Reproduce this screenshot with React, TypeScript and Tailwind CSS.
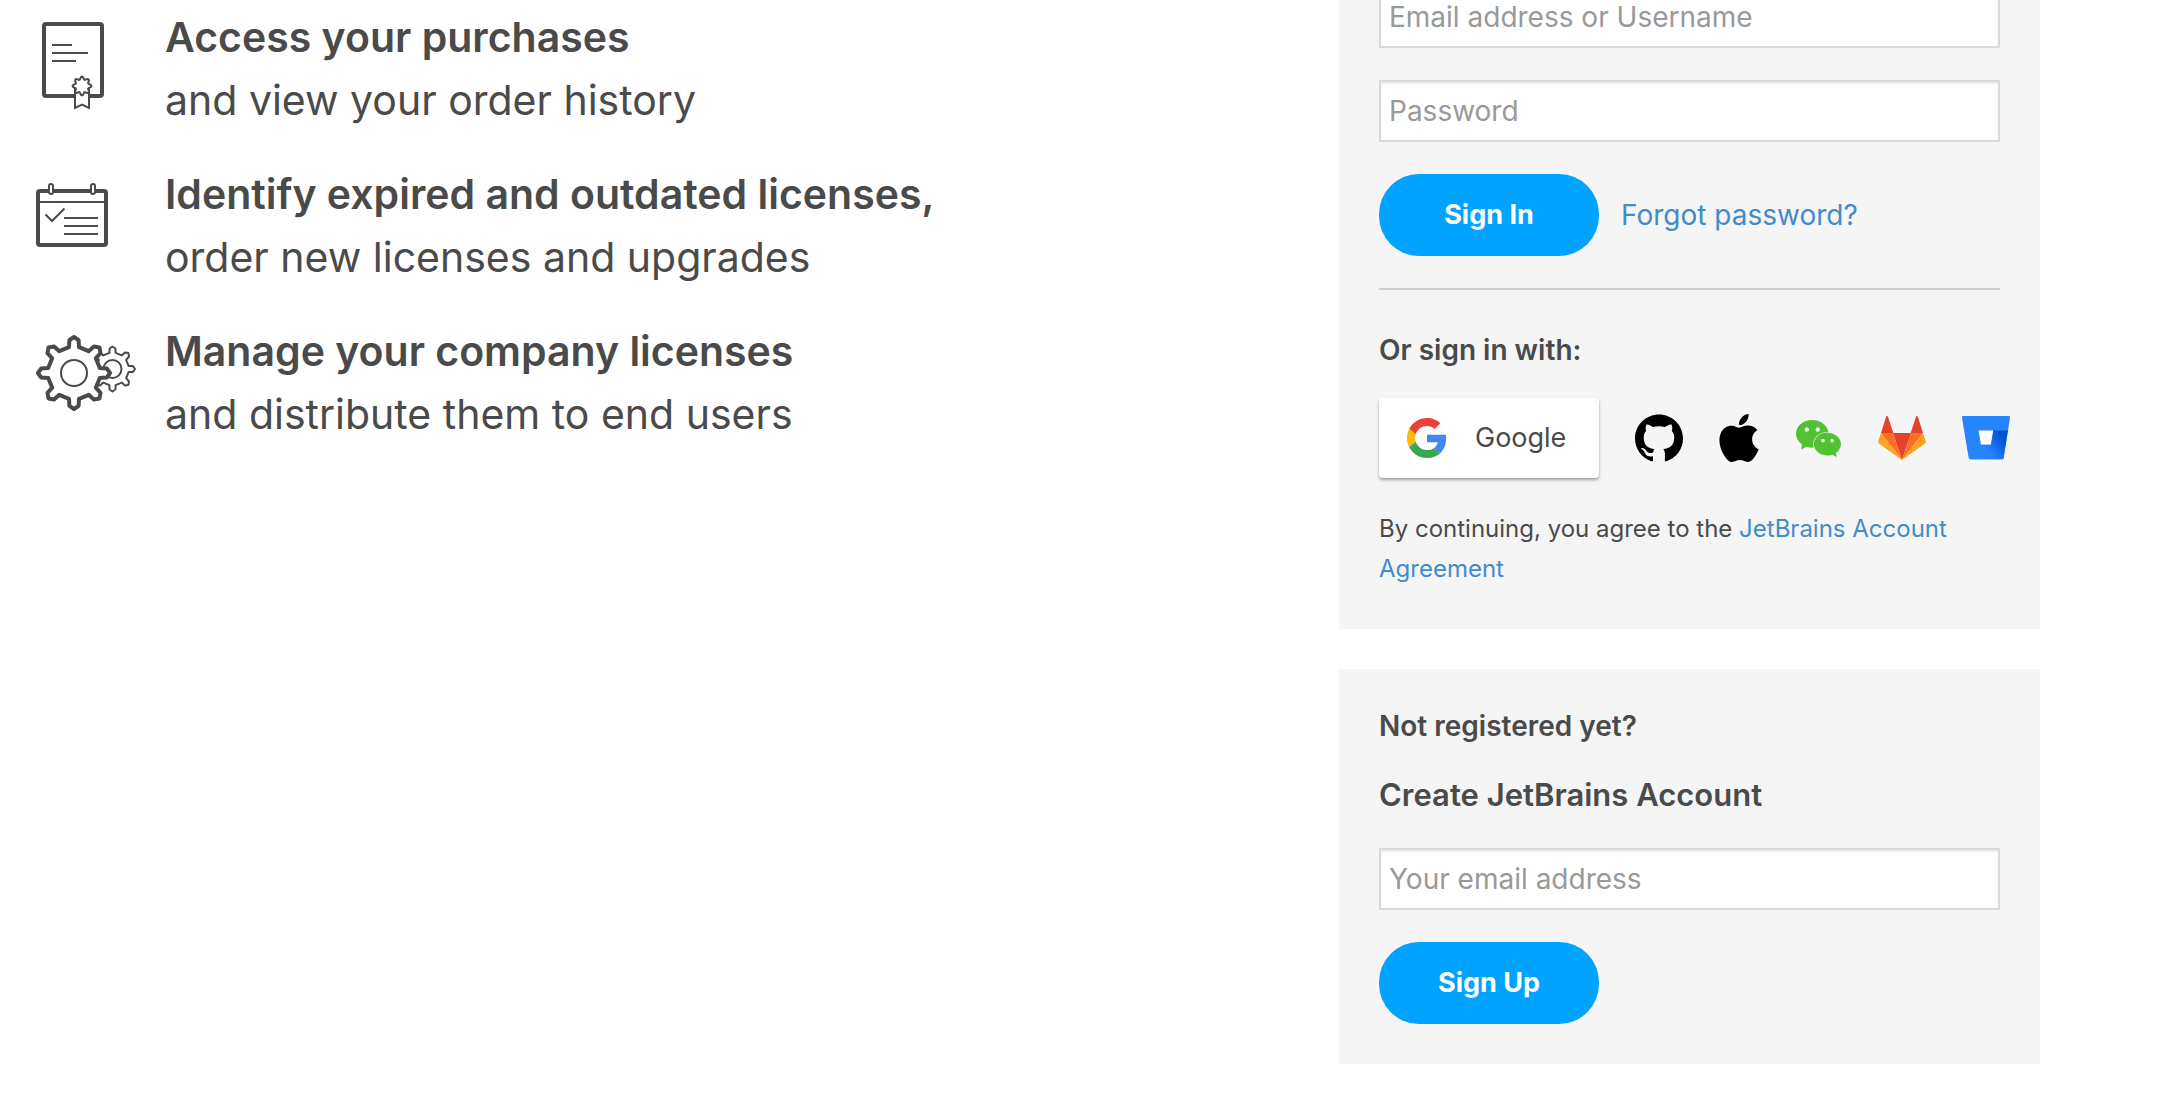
import type { ReactNode } from 'react'
import { SiApple, SiGithub, SiWechat } from 'react-icons/si'

const STROKE = '#4a4a4a'

type Point = [number, number]

function polar(cx: number, cy: number, r: number, deg: number): Point {
  const a = (deg * Math.PI) / 180
  return [cx + r * Math.sin(a), cy - r * Math.cos(a)]
}

function toPath(pts: Point[]): string {
  return 'M' + pts.map(([x, y]) => `${x.toFixed(1)} ${y.toFixed(1)}`).join('L') + 'Z'
}

/* Outline of an eight-toothed cog with slightly pointed teeth. */
function gearPath(cx: number, cy: number, r: number): string {
  const pts: Point[] = []
  for (let a = 0; a < 360; a += 45) {
    pts.push(polar(cx, cy, r * 0.73, a - 11))
    pts.push(polar(cx, cy, r * 0.92, a - 8))
    pts.push(polar(cx, cy, r, a))
    pts.push(polar(cx, cy, r * 0.92, a + 8))
    pts.push(polar(cx, cy, r * 0.73, a + 11))
  }
  return toPath(pts)
}

/* Wavy outline of the eight-lobed rosette on the certificate. */
function rosettePath(cx: number, cy: number): string {
  const pts: Point[] = []
  for (let a = 0; a < 360; a += 5) {
    pts.push(polar(cx, cy, 8 + 1.4 * Math.cos((8 * a * Math.PI) / 180), a))
  }
  return toPath(pts)
}

function FeatureIcon({ children }: { children: ReactNode }) {
  return (
    <svg viewBox="0 1 105 126" className="h-[126px] w-[105px] shrink-0" fill="none" stroke={STROKE} aria-hidden="true">
      {children}
    </svg>
  )
}

function CertificateIcon() {
  return (
    <FeatureIcon>
      <rect x="8" y="19" width="58" height="72" rx="2" strokeWidth="4" />
      <path d="M16 40h20M16 48h36M16 56h24" strokeWidth="2" />
      <path d="M39 84v19l7-3.500 7 3.500V84Z" fill="#fff" strokeWidth="2" />
      <path d={rosettePath(46, 81)} fill="#fff" strokeWidth="2" strokeLinejoin="round" />
    </FeatureIcon>
  )
}

function CalendarIcon() {
  return (
    <FeatureIcon>
      <rect x="2" y="29" width="68" height="54" rx="2" strokeWidth="4" />
      <path d="M2 40h68M28 56h34M28 64h34M28 72h34" strokeWidth="2" />
      <path d="M9.500 52.500L16 59L28.500 46.500" strokeWidth="2" />
      <rect x="13" y="22" width="4" height="10" rx="2" fill="#fff" strokeWidth="2" />
      <rect x="55" y="22" width="4" height="10" rx="2" fill="#fff" strokeWidth="2" />
    </FeatureIcon>
  )
}

function GearsIcon() {
  return (
    <FeatureIcon>
      <path d={gearPath(76.5, 50, 22.5)} strokeWidth="2" strokeLinejoin="round" />
      <circle cx="76.500" cy="50" r="9" strokeWidth="2" />
      <path d={gearPath(38, 54, 36)} fill="#fff" strokeWidth="4" strokeLinejoin="round" />
      <circle cx="38" cy="54" r="13" strokeWidth="2" />
    </FeatureIcon>
  )
}

function GoogleLogo() {
  return (
    <svg viewBox="0 0 48 48" className="size-10 shrink-0" aria-hidden="true">
      <path fill="#EA4335" d="M24 9.500c3.540 0 6.710 1.220 9.210 3.600l6.850-6.850C35.900 2.380 30.470 0 24 0 14.620 0 6.510 5.380 2.560 13.220l7.980 6.190C12.430 13.720 17.740 9.500 24 9.500z" />
      <path fill="#4285F4" d="M46.980 24.550c0-1.570-.15-3.090-.38-4.550H24v9.020h12.940c-.58 2.960-2.260 5.480-4.780 7.180l7.730 6c4.510-4.180 7.090-10.360 7.090-17.650z" />
      <path fill="#FBBC05" d="M10.530 28.590c-.48-1.450-.76-2.990-.76-4.590s.27-3.140.76-4.590l-7.980-6.190C.92 16.460 0 20.120 0 24c0 3.880.92 7.540 2.560 10.780l7.970-6.190z" />
      <path fill="#34A853" d="M24 48c6.480 0 11.930-2.130 15.890-5.810l-7.730-6c-2.150 1.450-4.920 2.300-8.160 2.300-6.260 0-11.570-4.220-13.470-9.910l-7.980 6.190C6.510 42.620 14.620 48 24 48z" />
    </svg>
  )
}

function GitLabLogo() {
  return (
    <svg viewBox="0 0 48 44" className="h-11 w-12" aria-hidden="true">
      <path fill="#E24329" d="M24 44L15 17h18z" />
      <path fill="#FC6D26" d="M24 44L15 17H3zM24 44L33 17h12z" />
      <path fill="#FCA326" d="M3 17L.2 25.300a2 2 0 0 0 .7 2.100L24 44zM45 17l2.800 8.300a2 2 0 0 1-.7 2.100L24 44z" />
      <path fill="#E24329" d="M3 17h12.300L10 .7a1 1 0 0 0-1.900 0zM45 17H32.700L38 .7a1 1 0 0 1 1.900 0z" />
    </svg>
  )
}

function BitbucketLogo() {
  return (
    <svg viewBox="0 0 48 44" className="h-11 w-12" aria-hidden="true">
      <defs>
        <linearGradient id="bucket-shade" x1="47" y1="19" x2="26" y2="36" gradientUnits="userSpaceOnUse">
          <stop offset=".18" stopColor="#0052CC" />
          <stop offset="1" stopColor="#2684FF" />
        </linearGradient>
      </defs>
      <path fill="#fff" d="M15 13h18v17H15z" />
      <path fill="#2684FF" fillRule="evenodd" d="M1.500 0A1.500 1.500 0 0 0 0 1.800L6.600 41.600A2 2 0 0 0 8.600 43.300H40.100A1.500 1.500 0 0 0 41.600 42L48 1.800A1.500 1.500 0 0 0 46.500 0zM29 28.700H19L16.500 14.600H31.300z" />
      <path fill="url(#bucket-shade)" d="M45.900 14.600H31.300L29 28.700H19L7.400 42.800a2 2 0 0 0 1.200.5H40.100A1.500 1.500 0 0 0 41.600 42z" />
    </svg>
  )
}

function Feature({ icon, title, text }: { icon: ReactNode; title: string; text: string }) {
  return (
    <li className="flex gap-6">
      {icon}
      <div className="text-[41px] leading-[63px]">
        <h2 className="font-semibold">{title}</h2>
        <p>{text}</p>
      </div>
    </li>
  )
}

function Field({ id, type, label }: { id: string; type: string; label: string }) {
  return (
    <input
      id={id}
      type={type}
      aria-label={label}
      placeholder={label}
      className="h-[62px] w-full border-2 border-[#d9d9d9] bg-white px-2 text-[28px] shadow-[inset_0_2px_2px_rgba(0,0,0,0.075)] placeholder:text-[#999]"
    />
  )
}

function PillButton({ children }: { children: ReactNode }) {
  return (
    <button type="button" className="h-[82px] w-[220px] rounded-[40px] bg-[#00a3ff] text-[27px] font-bold text-white">
      {children}
    </button>
  )
}

const PROVIDERS = [
  { name: 'GitHub', logo: <SiGithub className="size-12 text-black" /> },
  { name: 'Apple', logo: <SiApple className="h-12 w-10 text-black" viewBox="2 0 20 24" /> },
  { name: 'WeChat', logo: <SiWechat className="mx-px size-[45px] text-[#51c332]" /> },
  { name: 'GitLab', logo: <GitLabLogo /> },
  { name: 'Bitbucket', logo: <BitbucketLogo /> },
]

export default function App() {
  return (
    <main className="flex min-h-screen justify-between gap-10 overflow-hidden bg-white pr-[139px] pl-9 font-[Inter,sans-serif] text-[#4a4a4a]">
      <ul className="flex flex-col gap-[31px] pt-1.5">
        <Feature icon={<CertificateIcon />} title="Access your purchases" text="and view your order history" />
        <Feature icon={<CalendarIcon />} title="Identify expired and outdated licenses," text="order new licenses and upgrades" />
        <Feature icon={<GearsIcon />} title="Manage your company licenses" text="and distribute them to end users" />
      </ul>

      <div className="-mt-[54px] flex w-full max-w-[701px] flex-col gap-10">
        <section className="bg-[#f5f5f5] p-10">
          <form className="flex flex-col gap-8">
            <Field id="login" type="text" label="Email address or Username" />
            <Field id="password" type="password" label="Password" />
            <div className="flex items-center gap-[22px]">
              <PillButton>Sign In</PillButton>
              <a href="#forgot" className="text-[28px] text-[#428bca]">Forgot password?</a>
            </div>
          </form>
          <hr className="mt-8 border-t-2 border-[#d0d0d0]" />
          <h3 className="mt-10 text-[28px] leading-10 font-semibold">Or sign in with:</h3>
          <div className="mt-7 flex items-center gap-9">
            <button type="button" className="flex h-20 w-[220px] shrink-0 items-center gap-7 rounded bg-white pl-7 text-[27px] shadow-[0_2px_3px_rgba(0,0,0,0.35)]">
              <GoogleLogo />
              Google
            </button>
            {PROVIDERS.map(({ name, logo }) => (
              <button key={name} type="button" aria-label={name} className="shrink-0">
                {logo}
              </button>
            ))}
          </div>
          <p className="mt-[31px] text-[24px] leading-10">
            By continuing, you agree to the{' '}
            <a href="#agreement" className="text-[#428bca]">JetBrains Account Agreement</a>
          </p>
        </section>

        <section className="bg-[#f5f5f5] p-10">
          <h3 className="text-[28px] leading-[34px] font-semibold">Not registered yet?</h3>
          <h2 className="mt-7 mb-[29px] text-[31px] leading-[48px] font-semibold">Create JetBrains Account</h2>
          <form className="flex flex-col gap-8">
            <Field id="email" type="email" label="Your email address" />
            <div>
              <PillButton>Sign Up</PillButton>
            </div>
          </form>
        </section>
      </div>
    </main>
  )
}
